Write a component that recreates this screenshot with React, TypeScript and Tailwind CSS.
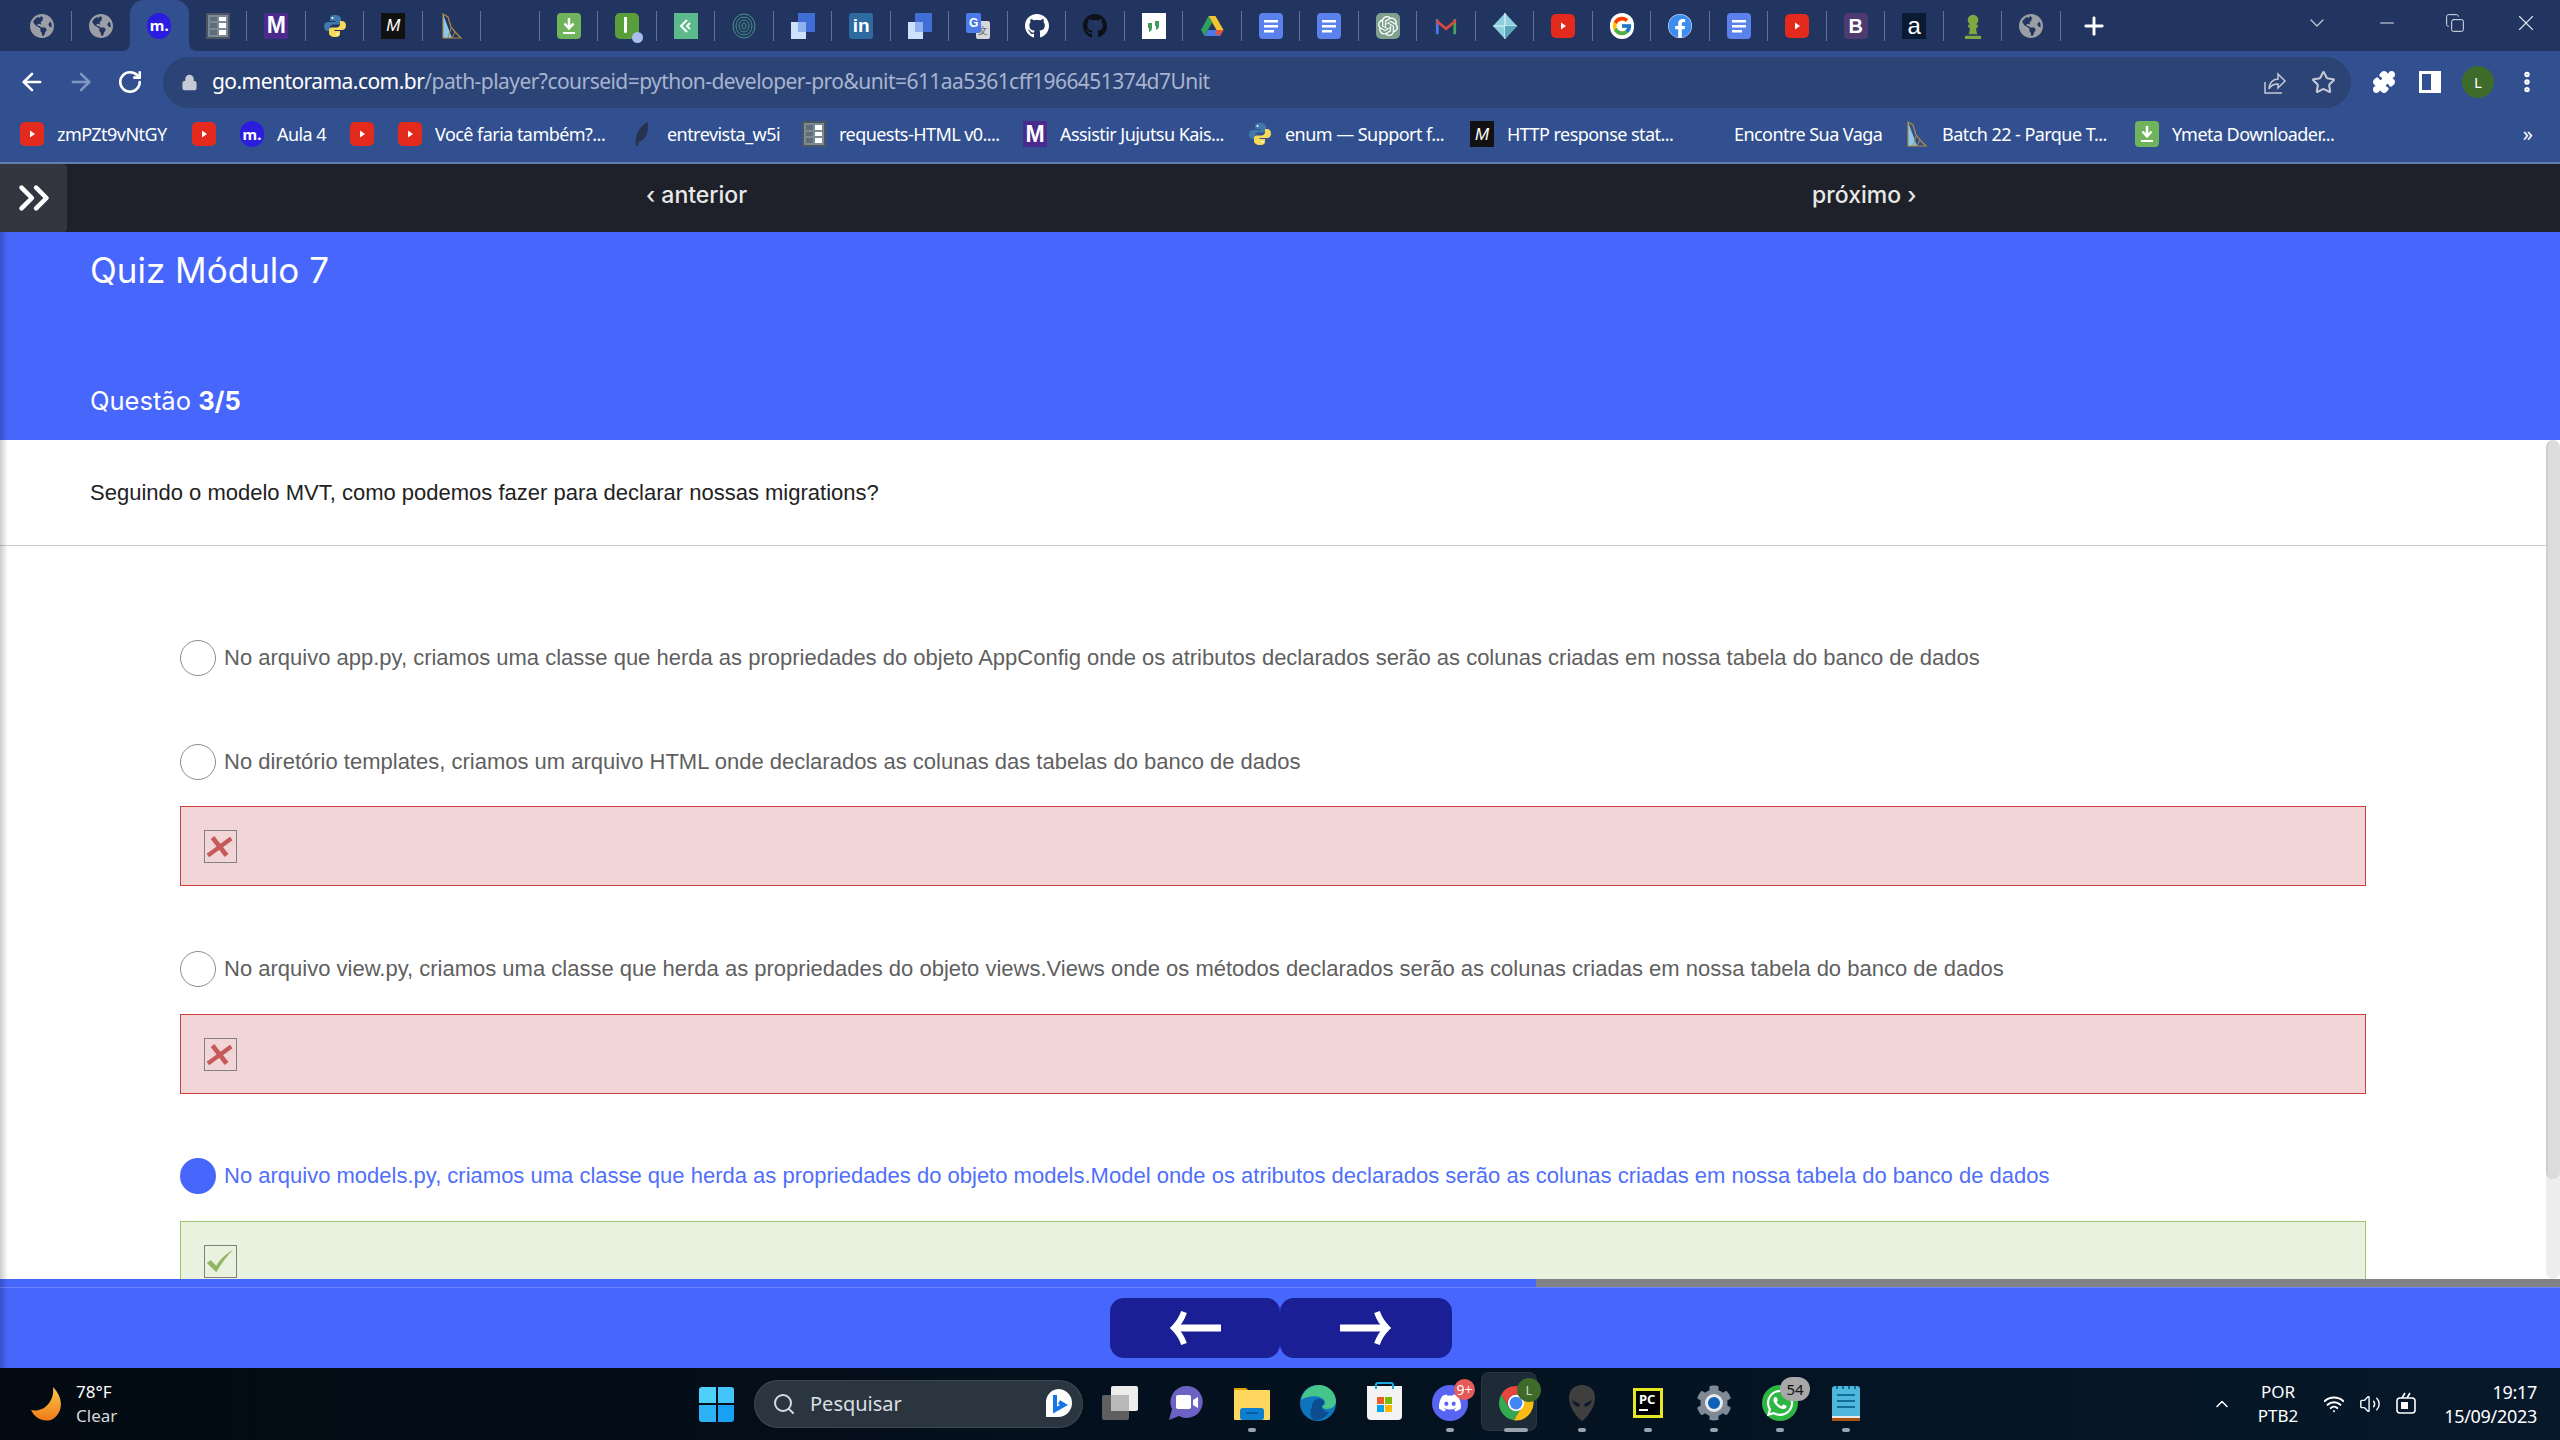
import React from "react";
import {
  ArrowLeft,
  ArrowRight,
  ChevronDown,
  ChevronUp,
  ChevronsRight,
  Copy,
  EllipsisVertical,
  Lock,
  Minus,
  Plus,
  Puzzle,
  RotateCw,
  Search,
  Star,
  Volume2,
  Wifi,
  X,
} from "lucide-react";
import { FaChessPawn, FaCog, FaDiscord, FaFacebook, FaGithub, FaGlobeAmericas, FaWhatsapp } from "react-icons/fa";
import { FcGoogle } from "react-icons/fc";
import { SiOpenai } from "react-icons/si";

const uiFont = "font-['Noto_Sans',sans-serif]";
const siteFont = "font-['Inter',sans-serif]";
const bodyFont = "font-['Liberation_Sans',Arial,sans-serif]";

function Favicon({ kind }: { kind: string }) {
  switch (kind) {
    case "globe":
      return <FaGlobeAmericas className="h-[26px] w-[24px] text-[#9b9ea5]" />;
    case "mentorama":
      return (
        <div className="flex h-[26px] w-[24px] items-center justify-center rounded-full bg-[#2a1de0] text-[15px] font-bold leading-none text-white">
          m.
        </div>
      );
    case "book":
      return (
        <div className="grid h-[26px] w-[24px] grid-cols-2 gap-[2px] border-2 border-[#4c5560] bg-[#7c8a96] p-[2px]">
          <div className="bg-[#5f6d78]" />
          <div className="bg-white" />
          <div className="bg-[#5f6d78]" />
          <div className="bg-white" />
          <div className="bg-[#5f6d78]" />
          <div className="bg-white" />
        </div>
      );
    case "purpleM":
      return (
        <div className={`flex h-[26px] w-[24px] items-center justify-center bg-[#4b2a8e] text-[23px] font-bold leading-none text-white ${bodyFont}`}>
          M
        </div>
      );
    case "blackM":
      return (
        <div className={`flex h-[26px] w-[24px] items-center justify-center bg-[#111111] text-[17px] italic leading-none text-white ${bodyFont}`}>
          M
        </div>
      );
    case "python":
      return (
        <svg viewBox="0 0 24 24" className="h-[26px] w-[24px]">
          <path d="M12 1C7 1 7 3 7 5v2h5.500v1H5C2.500 8 1 10 1 12.500S2.500 17 5 17h2v-3c0-2 1.500-3.500 3.500-3.500h5c1.500 0 2.500-1 2.500-2.500V5c0-2-2-4-6-4z" fill="#3f78ab" />
          <path d="M12 23c5 0 5-2 5-4v-2h-5.500v-1H19c2.500 0 4-2 4-4.500S21.500 7 19 7h-2v3c0 2-1.500 3.500-3.500 3.500h-5C7 13.500 6 14.500 6 16v3c0 2 2 4 6 4z" fill="#f7d95a" />
          <circle cx="9.500" cy="4" r="1" fill="#fff" />
          <circle cx="14.500" cy="20" r="1" fill="#fff" />
        </svg>
      );
    case "batch":
      return (
        <svg viewBox="0 0 24 26" className="h-[26px] w-[24px]">
          <path d="M3 1l9 24H3z" fill="#8cc8ee" />
          <path d="M3 1l5 3 3 10 5 6 5 5H3z" fill="none" stroke="#b08a3e" strokeWidth="1.200" />
          <path d="M8 25l3-10M12 25l3-6" stroke="#b08a3e" strokeWidth="1" />
        </svg>
      );
    case "download":
      return (
        <svg viewBox="0 0 24 26" className="h-[26px] w-[24px]">
          <rect width="24" height="26" rx="4" fill="#6fb35c" />
          <path d="M12 5v9M7.500 10.500l4.500 5 4.500-5" stroke="#fff" strokeWidth="2.500" fill="none" />
          <path d="M6 20h12" stroke="#fff" strokeWidth="2" />
        </svg>
      );
    case "lime":
      return (
        <div className="relative h-[26px] w-[24px] rounded-[5px] bg-[#5a9e3c]">
          <div className="absolute left-[9px] top-[4px] h-[16px] w-[3px] rounded-b-[3px] bg-white" />
          <div className="absolute bottom-[-4px] right-[-4px] h-[11px] w-[11px] rounded-full bg-[#a9bdf0]" />
        </div>
      );
    case "teal":
      return (
        <svg viewBox="0 0 24 26" className="h-[26px] w-[24px]">
          <rect width="24" height="26" fill="#5bb98c" />
          <path d="M13 7l-6 6 6 6M16 10l-3 3 3 3" stroke="#fff" strokeWidth="2" fill="none" />
        </svg>
      );
    case "spiral":
      return (
        <svg viewBox="0 0 24 26" className="h-[26px] w-[24px]" fill="none" stroke="#4aa086" strokeWidth="0.900">
          <ellipse cx="12" cy="13" rx="11" ry="12" />
          <ellipse cx="12" cy="13" rx="8" ry="9" />
          <ellipse cx="12" cy="13" rx="5" ry="6" />
          <ellipse cx="12" cy="13" rx="2" ry="3" />
        </svg>
      );
    case "copy":
      return (
        <svg viewBox="0 0 24 26" className="h-[26px] w-[24px]">
          <rect x="7" y="0" width="17" height="19" fill="#3f6fd6" />
          <rect x="0" y="9" width="15" height="17" fill="#cfe0fb" />
          <rect x="7" y="9" width="8" height="10" fill="#8fb0ee" />
        </svg>
      );
    case "linkedin":
      return (
        <div className={`flex h-[26px] w-[24px] items-center justify-center rounded-[3px] bg-[#2c6aa0] text-[19px] font-bold leading-none text-white ${bodyFont}`}>
          in
        </div>
      );
    case "translate":
      return (
        <div className="relative h-[26px] w-[24px]">
          <div className="absolute bottom-0 right-0 flex h-[18px] w-[14px] items-center justify-center rounded-[2px] bg-[#d5d7da] text-[10px] leading-none text-[#555]">
            文
          </div>
          <div className={`absolute left-0 top-0 flex h-[20px] w-[15px] items-center justify-center rounded-[2px] bg-[#4a7be8] text-[12px] font-bold leading-none text-white ${bodyFont}`}>
            G
          </div>
        </div>
      );
    case "githubWhite":
      return <FaGithub className="h-[26px] w-[24px] text-white" />;
    case "githubBlack":
      return <FaGithub className="h-[26px] w-[24px] text-[#0e1117]" />;
    case "quote":
      return (
        <svg viewBox="0 0 24 26" className="h-[26px] w-[24px]">
          <rect width="24" height="26" fill="#fff" />
          <path d="M6 10h4v5c0 2-1 3-3 4v-4H6zM13 8h4v5c0 2-1 3-3 4v-4h-1z" fill="#3f9a5b" />
        </svg>
      );
    case "drive":
      return (
        <svg viewBox="0 0 24 24" className="h-[26px] w-[24px]">
          <path d="M8.500 2h7l8 14h-7z" fill="#f4c430" />
          <path d="M8.500 2L1 16l3.500 6 8-14z" fill="#2ea05a" />
          <path d="M4.500 22h15.500l3.500-6H8z" fill="#4a7be8" />
          <path d="M16.500 16h7L20 22l-5-3z" fill="#e2523d" />
        </svg>
      );
    case "doc":
      return (
        <svg viewBox="0 0 24 26" className="h-[26px] w-[24px]">
          <rect width="24" height="26" rx="4" fill="#5b82ec" />
          <path d="M5 7h14v2.500H5zM5 12h14v2.500H5zM5 17h10v2.500H5z" fill="#fff" />
        </svg>
      );
    case "openai":
      return (
        <div className="flex h-[26px] w-[24px] items-center justify-center rounded-[5px] bg-[#7f9f8f]">
          <SiOpenai className="h-[20px] w-[20px] text-white" />
        </div>
      );
    case "gmail":
      return (
        <svg viewBox="0 0 24 24" className="h-[26px] w-[22px]">
          <path d="M1 4l3 1v16H1z" fill="#4a7be8" />
          <path d="M23 4l-3 1v16h3z" fill="#45a35f" />
          <path d="M1 4l11 9 11-9v4l-11 9L1 8z" fill="#dc4a3d" />
        </svg>
      );
    case "diamond":
      return (
        <svg viewBox="0 0 24 26" className="h-[26px] w-[24px]">
          <path d="M12 0l12 13-12 13L0 13z" fill="#8fd0de" />
          <path d="M12 0v26M0 13h24" stroke="#e4f4f7" strokeWidth="1.200" />
          <path d="M12 13h12L12 26z" fill="#5aa6bd" />
        </svg>
      );
    case "youtube":
      return (
        <svg viewBox="0 0 24 26" className="h-[26px] w-[24px]">
          <rect y="1" width="24" height="24" rx="5" fill="#e32a1c" />
          <path d="M10 9.500l5 3.500-5 3.500z" fill="#fff" />
        </svg>
      );
    case "google":
      return (
        <div className="flex h-[26px] w-[24px] items-center justify-center rounded-full bg-white">
          <FcGoogle className="h-[22px] w-[22px]" />
        </div>
      );
    case "facebook":
      return (
        <div className="h-[24px] w-[24px] rounded-full bg-white">
          <FaFacebook className="h-[24px] w-[24px] text-[#3b8df0]" />
        </div>
      );
    case "bootstrap":
      return (
        <div className={`flex h-[26px] w-[24px] items-center justify-center rounded-[4px] bg-[#4e3a70] text-[20px] font-bold leading-none text-white ${bodyFont}`}>
          B
        </div>
      );
    case "amazon":
      return (
        <div className={`flex h-[26px] w-[24px] items-center justify-center bg-[#0b1a33] text-[24px] leading-none text-white ${bodyFont}`}>
          a
        </div>
      );
    case "pawn":
      return <FaChessPawn className="h-[26px] w-[24px] text-[#7fa843]" />;
    case "feather":
      return (
        <svg viewBox="0 0 24 26" className="h-[26px] w-[24px]">
          <path d="M6 25C4 16 9 5 18 1c1 8-2 18-9 20l-1 4z" fill="#26344f" />
        </svg>
      );
    default:
      return <div className="h-[24px] w-[24px]" />;
  }
}

const tabs = [
  "globe", "globe", "mentorama", "book", "purpleM", "python", "blackM", "batch", "blank", "download", "lime", "teal",
  "spiral", "copy", "linkedin", "copy", "translate", "githubWhite", "githubBlack", "quote", "drive", "doc", "doc",
  "openai", "gmail", "diamond", "youtube", "google", "facebook", "doc", "youtube", "bootstrap", "amazon", "pawn", "globe",
];

const bookmarks = [
  { icon: "youtube", label: "zmPZt9vNtGY", width: "w-[111px]" },
  { icon: "youtube", label: "", width: "" },
  { icon: "mentorama", label: "Aula 4", width: "w-[49px]" },
  { icon: "youtube", label: "", width: "" },
  { icon: "youtube", label: "Você faria também?...", width: "w-[171px]" },
  { icon: "feather", label: "entrevista_w5i", width: "w-[111px]" },
  { icon: "book", label: "requests-HTML v0....", width: "w-[160px]" },
  { icon: "purpleM", label: "Assistir Jujutsu Kais...", width: "w-[164px]" },
  { icon: "python", label: "enum — Support f...", width: "w-[161px]" },
  { icon: "blackM", label: "HTTP response stat...", width: "w-[166px]" },
  { icon: "blank", label: "Encontre Sua Vaga", width: "w-[147px]" },
  { icon: "batch", label: "Batch 22 - Parque T...", width: "w-[169px]" },
  { icon: "download", label: "Ymeta Downloader...", width: "w-[164px]" },
];

function BrowserChrome() {
  return (
    <div className={uiFont}>
      <div className="flex h-[51px] items-center bg-[#213560] pl-[13px]">
        {tabs.map((kind, i) => (
          <div
            key={i}
            className={`relative flex h-[51px] w-[58.5px] shrink-0 items-center justify-center ${
              i === 2 ? "rounded-t-[14px] bg-[#325090]" : ""
            }`}
          >
            <Favicon kind={kind} />
            {i !== 1 && i !== 2 ? <div className="absolute right-0 top-[11px] h-[30px] w-[1px] bg-[#5f7398]" /> : null}
            {i === 2 ? (
              <>
                <svg viewBox="0 0 8 8" className="absolute bottom-0 left-[-8px] h-[8px] w-[8px]">
                  <path d="M8 0v8H0c5 0 8-3 8-8z" fill="#325090" />
                </svg>
                <svg viewBox="0 0 8 8" className="absolute bottom-0 right-[-8px] h-[8px] w-[8px]">
                  <path d="M0 0v8h8C3 8 0 5 0 0z" fill="#325090" />
                </svg>
              </>
            ) : null}
          </div>
        ))}
        <Plus className="ml-[19px] h-[28px] w-[28px] text-white" strokeWidth={2.500} />
        <ChevronDown className="mb-[6px] ml-[197px] h-[24px] w-[24px] text-[#c5cddd]" strokeWidth={1.200} />
        <Minus className="mb-[6px] ml-[47px] h-[22px] w-[22px] text-[#dfe4ee]" strokeWidth={1.200} />
        <Copy className="mb-[6px] ml-[47px] h-[20px] w-[20px] text-[#dfe4ee]" strokeWidth={1.200} />
        <X className="mb-[6px] ml-[48px] h-[26px] w-[26px] text-[#dfe4ee]" strokeWidth={1} />
      </div>

      <div className="flex h-[57px] items-end bg-[#325090] text-white">
        <div className="flex h-[57px] w-[163px] shrink-0 items-center pl-[18px] pt-[5px]">
          <ArrowLeft className="h-[28px] w-[28px]" strokeWidth={2.200} />
          <ArrowRight className="ml-[21px] h-[28px] w-[28px] text-[#8097c2]" strokeWidth={2.200} />
          <RotateCw className="ml-[22px] h-[26px] w-[26px]" strokeWidth={2.400} />
        </div>
        <div className="flex h-[51px] w-[2188px] shrink-0 items-center rounded-full bg-[#2c4375] pl-[18px]">
          <Lock className="h-[17px] w-[17px] fill-[#c5cad6] text-[#c5cad6]" />
          <div className="mb-[2px] ml-[14px] whitespace-nowrap text-[21px] leading-none tracking-[-0.55px] text-[#a6b4cf]">
            <span className="text-white">go.mentorama.com.br</span>/path-player?courseid=python-developer-pro&unit=611aa5361cff1966451374d7Unit
          </div>
          <svg viewBox="0 0 24 24" className="ml-auto h-[26px] w-[24px]" fill="none" stroke="#c5cad6" strokeWidth="1.500">
            <path d="M2 11v11h17" />
            <path d="M6 18c0-6 4-10 9-10V3l7 7-7 7v-4c-4 0-7 1-9 5z" />
          </svg>
          <Star className="ml-[24px] mr-[15px] h-[25px] w-[25px] text-[#c5cad6]" strokeWidth={2} />
        </div>
        <div className="flex h-[57px] flex-1 items-center pl-[21px] pt-[5px]">
          <Puzzle className="h-[24px] w-[24px] fill-white" />
          <div className="ml-[23px] flex h-[22px] w-[22px] justify-end border-[3px] border-white">
            <div className="w-[7px] bg-white" />
          </div>
          <div className="ml-[21px] flex h-[32px] w-[32px] items-center justify-center rounded-full bg-[#3f6b2a] text-[15px] leading-none">
            L
          </div>
          <EllipsisVertical className="ml-[20px] h-[26px] w-[26px]" strokeWidth={3} />
        </div>
      </div>

      <div className="flex h-[56px] items-center gap-[24px] border-b-2 border-[#5f7fb2] bg-[#325090] pb-[2px] pl-[20px] text-[18px] leading-none text-white">
        {bookmarks.map((b, i) => (
          <div key={i} className="flex shrink-0 items-center gap-[13px]">
            <Favicon kind={b.icon} />
            {b.label ? <span className={`${b.width} whitespace-nowrap tracking-[-0.55px]`}>{b.label}</span> : null}
          </div>
        ))}
        <span className="ml-auto mr-[27px] text-[20px]">»</span>
      </div>
    </div>
  );
}

function AnswerRow({ text, selected }: { text: string; selected?: boolean }) {
  return (
    <div className="flex h-[36px] items-center gap-[8px]">
      <div
        className={`h-[36px] w-[36px] shrink-0 rounded-full ${
          selected ? "bg-[#4766fb]" : "border border-[#8c8c8c] bg-white"
        }`}
      />
      <span className={`whitespace-nowrap text-[22px] leading-none ${selected ? "text-[#4f6ffb]" : "text-[#5f5f5f]"}`}>{text}</span>
    </div>
  );
}

function Feedback({ ok }: { ok: boolean }) {
  return (
    <div
      className={`flex h-[80px] items-center border pl-[23px] ${
        ok ? "border-[#9bc76b] bg-[#e9f2de]" : "border-[#c9413f] bg-[#f2d6d7]"
      }`}
    >
      <div className="h-[33px] w-[33px] border border-[#808080]">
        {ok ? (
          <svg viewBox="0 0 33 33">
            <path d="M2 18l4-3 6 6C17 13 23 8 30 4 23 11 17 19 12 28z" fill="#93b566" />
          </svg>
        ) : (
          <svg viewBox="0 0 33 33" fill="none" stroke="#c55a5a">
            <path d="M3 26L28 8" strokeWidth="4.500" />
            <path d="M8 7l15 19" strokeWidth="5" />
          </svg>
        )}
      </div>
    </div>
  );
}

function QuizPage() {
  return (
    <div className="relative flex min-h-0 flex-1 flex-col bg-[#4766fb]">
      <div className="pointer-events-none absolute inset-y-0 left-0 z-10 w-[8px] bg-gradient-to-r from-black/20 to-transparent" />

      <div className={`flex h-[208px] shrink-0 flex-col pl-[90px] pt-[16px] text-white ${siteFont}`}>
        <div className="text-[35px] leading-[44px]">Quiz Módulo 7</div>
        <div className="mt-[93px] text-[25.500px] leading-[32px]">
          Questão <b className="font-bold">3/5</b>
        </div>
      </div>

      <div className={`flex min-h-0 flex-1 bg-white ${bodyFont}`}>
        <div className="min-w-0 flex-1 overflow-hidden">
          <div className="flex h-[106px] items-center border-b border-[#cccccc] pb-[1px] pl-[90px] text-[22px] text-[#222222]">
            Seguindo o modelo MVT, como podemos fazer para declarar nossas migrations?
          </div>
          <div className="w-[2366px] pl-[180px] pt-[94px]">
            <AnswerRow text="No arquivo app.py, criamos uma classe que herda as propriedades do objeto AppConfig onde os atributos declarados serão as colunas criadas em nossa tabela do banco de dados" />
            <div className="mt-[68px]">
              <AnswerRow text="No diretório templates, criamos um arquivo HTML onde declarados as colunas das tabelas do banco de dados" />
            </div>
            <div className="mt-[26px]">
              <Feedback ok={false} />
            </div>
            <div className="mt-[65px]">
              <AnswerRow text="No arquivo view.py, criamos uma classe que herda as propriedades do objeto views.Views onde os métodos declarados serão as colunas criadas em nossa tabela do banco de dados" />
            </div>
            <div className="mt-[27px]">
              <Feedback ok={false} />
            </div>
            <div className="mt-[64px]">
              <AnswerRow selected text="No arquivo models.py, criamos uma classe que herda as propriedades do objeto models.Model onde os atributos declarados serão as colunas criadas em nossa tabela do banco de dados" />
            </div>
            <div className="mt-[27px]">
              <Feedback ok />
            </div>
          </div>
        </div>
        <div className="flex w-[14px] shrink-0 flex-col overflow-hidden rounded-b-[10px] rounded-t-[10px] bg-[#ededed]">
          <div className="h-[739px] rounded-b-[10px] rounded-t-[10px] border-l-2 border-[#cfcfcf] bg-[#dcdcdc]" />
        </div>
      </div>

      <div className="flex h-[8px] shrink-0 justify-end bg-[#4766fb]">
        <div className="h-[8px] w-[1024px] bg-[#818286]" />
      </div>
      <div className="flex h-[81px] shrink-0 justify-center border-t border-[#6f88ff] pl-[2px] pt-[10px]">
        <button className="flex h-[60px] w-[170px] items-center justify-center rounded-[14px] bg-[#1a1f96]">
          <svg viewBox="0 0 52 36" className="h-[36px] w-[52px]" fill="none" stroke="#fff">
            <path d="M8 18h44" strokeWidth="7" />
            <path d="M15 2C13 8 9 14 5 18c4 4 8 10 10 16" strokeWidth="6" />
          </svg>
        </button>
        <button className="flex h-[60px] w-[172px] items-center justify-center rounded-[14px] bg-[#1a1f96]">
          <svg viewBox="0 0 52 36" className="h-[36px] w-[52px]" fill="none" stroke="#fff">
            <path d="M0 18h44" strokeWidth="7" />
            <path d="M37 2c2 6 6 12 10 16-4 4-8 10-10 16" strokeWidth="6" />
          </svg>
        </button>
      </div>
    </div>
  );
}

function TaskIcon({ children, dot, active }: { children: React.ReactNode; dot?: boolean; active?: boolean }) {
  return (
    <div className="relative flex h-[72px] w-[66px] shrink-0 items-center justify-center pb-[2px]">
      {active ? <div className="absolute left-[-2px] top-[4px] h-[59px] w-[56px] rounded-[8px] border border-white/5 bg-white/10" /> : null}
      <div className="relative">{children}</div>
      {dot ? (
        <div className={`absolute bottom-[8px] h-[4px] rounded-full bg-[#9aa3ad] ${active ? "w-[24px]" : "w-[8px]"}`} />
      ) : null}
    </div>
  );
}

function Taskbar() {
  return (
    <div className={`flex h-[72px] shrink-0 items-center bg-gradient-to-r from-[#030a12] via-[#04111f] to-[#06182a] text-white ${uiFont}`}>
      <div className="flex w-[699px] shrink-0 items-center pl-[31px]">
        <svg viewBox="0 0 32 34" className="h-[34px] w-[32px]">
          <defs>
            <linearGradient id="moon" x1="0" y1="0" x2="0" y2="1">
              <stop offset="0" stopColor="#ffc94a" />
              <stop offset="1" stopColor="#ee7a16" />
            </linearGradient>
          </defs>
          <path d="M22 0c10 10 11 24 0 32-8 4-18 0-22-9 12 3 24-8 22-23z" fill="url(#moon)" />
        </svg>
        <div className="ml-[13px] text-[17px] leading-[24px]">
          <div>78°F</div>
          <div className="text-[#d5d8dc]">Clear</div>
        </div>
      </div>

      <div className="grid h-[35px] w-[35px] shrink-0 grid-cols-2 gap-[2px]">
        <div className="rounded-tl-[3px] bg-[#4fd0fb]" />
        <div className="rounded-tr-[3px] bg-[#43c5fa]" />
        <div className="rounded-bl-[3px] bg-[#2eb2f6]" />
        <div className="rounded-br-[3px] bg-[#18a0f2]" />
      </div>

      <div className="ml-[20px] flex h-[48px] w-[329px] shrink-0 items-center rounded-full border border-white/10 bg-[#2b3540] pl-[17px]">
        <Search className="h-[24px] w-[24px] text-[#d8dade]" strokeWidth={2} />
        <span className="ml-[14px] text-[20px] leading-none text-[#dcdfe2]">Pesquisar</span>
        <svg viewBox="0 0 28 32" className="ml-auto mr-[10px] h-[32px] w-[28px]">
          <path d="M14 1a14 14 0 0 1 0 28H2V14A13 13 0 0 1 14 1z" fill="#fff" />
          <path d="M11 7v15l9-5-5-3" fill="none" stroke="#1676e8" strokeWidth="4" />
        </svg>
      </div>

      <div className="ml-[4px] flex items-center">
        <TaskIcon>
          <svg viewBox="0 0 36 34" className="h-[34px] w-[36px]">
            <rect x="0" y="9" width="27" height="25" rx="2" fill="#5f5f5f" />
            <rect x="9" y="0" width="27" height="25" rx="2" fill="#ededed" />
            <rect x="9" y="9" width="18" height="16" fill="#b9b9b9" />
          </svg>
        </TaskIcon>
        <TaskIcon>
          <svg viewBox="0 0 34 36" className="h-[36px] w-[34px]">
            <path d="M17 1a16 16 0 1 1-7 30L0 35l3-11A16 16 0 0 1 17 1z" fill="#6c62c4" />
            <rect x="7" y="10" width="15" height="14" rx="2" fill="#fff" />
            <path d="M24 15l5-3v11l-5-3z" fill="#fff" />
          </svg>
        </TaskIcon>
        <TaskIcon dot>
          <svg viewBox="0 0 36 34" className="h-[34px] w-[36px]">
            <path d="M0 2h12l4 4h-16z" fill="#e0a100" />
            <rect y="4" width="36" height="30" rx="1" fill="#ffd75e" />
            <rect x="6" y="22" width="24" height="12" rx="3" fill="#0f7fd0" />
            <rect x="12" y="26" width="12" height="2" fill="#0a5d9c" />
          </svg>
        </TaskIcon>
        <TaskIcon>
          <svg viewBox="0 0 36 36" className="h-[36px] w-[36px]">
            <circle cx="18" cy="18" r="18" fill="#0e74bd" />
            <path d="M1 15C3 5 11 0 19 0c9 0 17 7 17 16 0 5-4 8-9 8-4 0-5-2-5-3 3-1 4-3 2-6-3-4-14-6-23 0z" fill="#45c58a" />
            <path d="M12 22c0-7 6-10 11-7 2 2 1 5-1 6 0 3 2 6 7 6-4 6-10 9-15 8-5-3-4-9-2-13z" fill="#0b4d8f" />
          </svg>
        </TaskIcon>
        <TaskIcon>
          <div className="relative flex h-[34px] w-[35px] items-center justify-center rounded-b-[4px] bg-[#f3f3f3]">
            <div className="absolute top-[-4px] h-[7px] w-[19px] rounded-t-[3px] border-x-2 border-t-2 border-[#20a8e0]" />
            <div className="mt-[3px] grid h-[15px] w-[15px] grid-cols-2 gap-[1px]">
              <div className="bg-[#ee5a28]" />
              <div className="bg-[#7fb900]" />
              <div className="bg-[#00a4ef]" />
              <div className="bg-[#ffb900]" />
            </div>
          </div>
        </TaskIcon>
        <TaskIcon dot>
          <div className="flex h-[36px] w-[36px] items-center justify-center rounded-full bg-[#5865f2]">
            <FaDiscord className="h-[24px] w-[24px] text-white" />
          </div>
          <div className="absolute right-[-7px] top-[-6px] flex h-[21px] w-[21px] items-center justify-center rounded-full bg-[#e75a5a] text-[14px] leading-none">
            9+
          </div>
        </TaskIcon>
        <TaskIcon dot active>
          <svg viewBox="0 0 48 48" className="h-[36px] w-[36px]">
            <path d="M24 4C16.500 4 10 8 6.700 14l8.700 15A10 10 0 0 1 24 14h17.300C37.900 8 31.500 4 24 4z" transform="translate(-3.400 -3.400) scale(1.150)" fill="#e8453c" />
            <path d="M6.700 14A20 20 0 0 0 21.500 43.800l8.700-15A10 10 0 0 1 15.400 29z" transform="translate(-3.400 -3.400) scale(1.150)" fill="#34a853" />
            <path d="M41.300 14H24a10 10 0 0 1 6.200 14.800l-8.700 15A20 20 0 0 0 41.300 14z" transform="translate(-3.400 -3.400) scale(1.150)" fill="#f9bc15" />
            <circle cx="24" cy="24" r="11" fill="#fff" />
            <circle cx="24" cy="24" r="8.500" fill="#4285f4" />
          </svg>
          <div className="absolute right-[-7px] top-[-7px] flex h-[24px] w-[24px] items-center justify-center rounded-full bg-[#3f6b2a] text-[13px] leading-none text-[#cfd8c4]">
            L
          </div>
        </TaskIcon>
        <TaskIcon dot>
          <svg viewBox="0 0 26 36" className="h-[36px] w-[26px]">
            <path d="M13 0c8 0 13 5 13 13 0 9-8 20-13 23C8 33 0 22 0 13 0 5 5 0 13 0z" fill="#3f3f3f" />
            <path d="M3 15l8 4-1 3c-4-1-6-3-7-7zM23 15l-8 4 1 3c4-1 6-3 7-7z" fill="#0e1a2c" />
          </svg>
        </TaskIcon>
        <TaskIcon dot>
          <div className="h-[30px] w-[30px] border-[3px] border-[#e6e622] bg-black pl-[3px] pt-[1px] text-[13px] font-bold leading-[14px] text-white">
            PC
            <div className="mt-[3px] h-[2px] w-[9px] bg-white" />
          </div>
        </TaskIcon>
        <TaskIcon dot>
          <FaCog className="h-[36px] w-[36px] text-[#7f8a96]" />
          <div className="absolute left-[9px] top-[9px] h-[18px] w-[18px] rounded-full border-[3px] border-[#e8eaed] bg-[#0f62b8]" />
        </TaskIcon>
        <TaskIcon dot>
          <div className="flex h-[36px] w-[36px] items-center justify-center rounded-full bg-[#2cb742]">
            <FaWhatsapp className="h-[30px] w-[30px] text-white" />
          </div>
          <div className="absolute right-[-12px] top-[-8px] flex h-[24px] w-[30px] items-center justify-center rounded-full bg-[#a8a8a8] text-[15px] leading-none text-[#111111]">
            54
          </div>
        </TaskIcon>
        <TaskIcon dot>
          <div className="flex h-[35px] w-[28px] flex-col rounded-t-[3px] bg-[#4fb6dc]">
            <div className="flex h-[3px] justify-around px-[2px]">
              <div className="w-[2px] bg-[#0f6f96]" />
              <div className="w-[2px] bg-[#0f6f96]" />
              <div className="w-[2px] bg-[#0f6f96]" />
              <div className="w-[2px] bg-[#0f6f96]" />
            </div>
            <div className="mt-[5px] flex flex-1 flex-col gap-[4px] px-[5px]">
              <div className="h-[2px] bg-[#0f6f96]" />
              <div className="h-[2px] bg-[#0f6f96]" />
              <div className="h-[2px] bg-[#0f6f96]" />
            </div>
            <div className="h-[2px] bg-[#e8e8e8]" />
            <div className="h-[3px] bg-[#a8520f]" />
          </div>
        </TaskIcon>
      </div>

      <div className="ml-auto flex items-center pr-[23px] text-[17px] leading-[24px]">
        <ChevronUp className="h-[20px] w-[20px]" strokeWidth={1.800} />
        <div className="ml-[26px] text-center">
          <div>POR</div>
          <div>PTB2</div>
        </div>
        <Wifi className="ml-[25px] h-[22px] w-[22px]" strokeWidth={2.200} />
        <Volume2 className="ml-[14px] h-[22px] w-[22px]" strokeWidth={1.500} />
        <svg viewBox="0 0 24 24" className="ml-[12px] h-[24px] w-[24px]" fill="none" stroke="#fff" strokeWidth="1.600">
          <rect x="4" y="6" width="18" height="15" rx="3" />
          <path d="M8 10h7v7H8z" fill="#fff" stroke="none" />
          <path d="M9 6l3-5M14 6l3-5" />
        </svg>
        <div className="ml-[27px] text-right text-[18px] tracking-[-0.3px]">
          <div>19:17</div>
          <div>15/09/2023</div>
        </div>
      </div>
    </div>
  );
}

export default function App() {
  return (
    <div className="flex h-[1440px] w-[2560px] flex-col overflow-hidden">
      <BrowserChrome />
      <div className={`flex h-[68px] shrink-0 items-center bg-[#1e2129] pb-[6px] text-[23px] font-medium leading-none text-[#e8e8e8] ${siteFont}`}>
        <div className="mb-[-6px] flex h-[68px] w-[67px] items-center justify-center rounded-r-[4px] bg-[#33363f]">
          <ChevronsRight className="h-[50px] w-[50px] text-white" strokeWidth={2.200} />
        </div>
        <span className="ml-[579px]">‹ anterior</span>
        <span className="ml-[1065px]">próximo ›</span>
      </div>
      <QuizPage />
      <Taskbar />
    </div>
  );
}
